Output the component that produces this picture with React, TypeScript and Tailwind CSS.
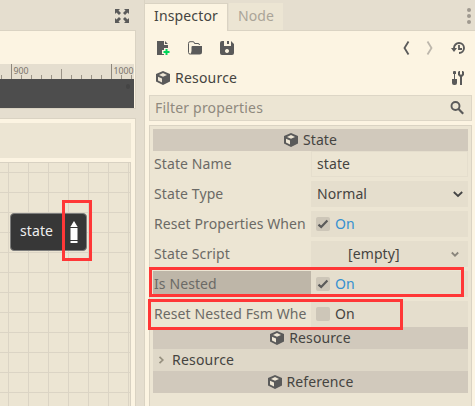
import type { ReactNode } from "react";

const ink = "#5a5a5a";

function Cube() {
  return (
    <svg width="14" height="14" viewBox="0 0 14 14" className="shrink-0">
      <path d="M7 0 L14 3 V10.6 L7 14 L0 10.6 V3 Z" fill={ink} />
      <path d="M7 2.1 L11 3.9 L7 5.8 L3 3.9 Z" fill="#eee6d5" />
      <path d="M2 5.7 L6 7.6 V11.4 L2 9.5 Z" fill="#eee6d5" />
    </svg>
  );
}

function Check({ on }: { on?: boolean }) {
  return (
    <span className="flex size-[14px] shrink-0 items-center justify-center rounded-[2px] bg-[#cdc6b8]">
      {on && (
        <svg width="12" height="12" viewBox="0 0 12 12">
          <path d="M1.5 6.6 L4.2 9 L10.4 2.6" fill="none" stroke={ink} strokeWidth="2.2" />
        </svg>
      )}
    </span>
  );
}

function Row({ label, selected, field, children }: { label: string; selected?: boolean; field?: boolean; children: ReactNode }) {
  return (
    <div className="flex h-[26px] shrink-0">
      <div className={`w-[158px] overflow-hidden whitespace-nowrap pl-[1px] leading-[26px] text-[#6b6a66] ${selected ? "bg-[#beb6a8]" : ""}`}>
        {label}
      </div>
      <div
        className={`flex flex-1 items-center ${field ? "border border-[#e5decd] bg-[#ece5d3] px-[5px]" : "bg-[#e5decd] px-[5px]"}`}
      >
        {children}
      </div>
    </div>
  );
}

function Header({ title }: { title: string }) {
  return (
    <div className="flex h-[22px] shrink-0 items-center justify-center gap-[5px] bg-[#d1c9bc]">
      <Cube />
      <span>{title}</span>
    </div>
  );
}

const minorTicks = [1, 21, 31, 41, 51, 71, 81, 91, 101, 121, 131];
const vLines = [8, 28, 48, 68, 88, 108, 128];
const hLines = [10, 30, 50, 70, 90, 110, 130, 150, 170, 190, 210, 230];

function Workspace() {
  return (
    <div className="flex w-[144px] shrink-0 flex-col">
      <div className="flex h-[30px] shrink-0 items-center justify-end pr-[14px] pt-[2px]">
        <svg width="16" height="16" viewBox="0 0 16 16" fill={ink}>
          <path d="M1 1h5L4.500 2.500 7 5 5 7 2.500 4.500 1 6zM15 1v5l-1.500-1.500L11 7 9 5l2.500-2.500L10 1zM1 15v-5l1.500 1.500L5 9l2 2-2.500 2.500L6 15zM15 15h-5l1.500-1.500L9 11l2-2 2.500 2.500L15 10z" />
        </svg>
      </div>
      <div className="flex h-[79px] w-[136px] shrink-0 flex-col border-y border-r border-[#dad3c3] bg-[#fcf4e2] pr-[1px] pt-[33px]">
        <svg width="134" height="15" className="block shrink-0 bg-[#e5decf] tracking-normal" shapeRendering="crispEdges">
          {minorTicks.map((x) => (
            <rect key={x} x={x} y="11" width="1" height="4" fill="#9a9387" />
          ))}
          <rect x="61" y="5" width="1" height="10" fill="#9a9387" />
          <rect x="11" y="0" width="1" height="15" fill="#8e877c" />
          <rect x="111" y="0" width="1" height="15" fill="#8e877c" />
          <text x="13.5" y="10" fontSize="9.5" fill="#7a746a" textLength="15" lengthAdjust="spacingAndGlyphs">900</text>
          <text x="113.5" y="10" fontSize="9.5" fill="#7a746a" textLength="20" lengthAdjust="spacingAndGlyphs">1000</text>
        </svg>
        <div className="h-[29px] w-[134px] shrink-0 bg-[#4d4d4d] pl-[126px] pt-[5px]">
          <div className="h-[5px] w-[4px] rounded-full bg-[#444444]" />
        </div>
      </div>
      <div className="mt-[9px] flex min-h-0 w-[136px] flex-1 flex-col border-r border-t border-[#dad3c3] bg-[#fcf4e2] pr-[4px] pt-[4px]">
        <div className="h-[35px] shrink-0 bg-[#ece5d3]" />
        <div className="relative mt-[4px] min-h-0 flex-1 overflow-hidden border-r border-t border-[#d8d1c2] bg-[#ece5d3]">
          <svg width="131" height="244" className="block" shapeRendering="crispEdges">
            {vLines.map((x) => (
              <rect key={x} x={x} y="0" width="1" height="244" fill="#dbd4c5" />
            ))}
            {hLines.map((y) => (
              <rect key={y} x="0" y={y - 1} width="131" height="1" fill="#dbd4c5" />
            ))}
          </svg>
          <div className="absolute left-[10px] top-[50px] flex h-[38px] w-[77px] items-center rounded-[4px] border border-[#7d7d7c] bg-[#373737] pl-[9px] text-[#efefef]">
            <span className="-mt-[2px] w-[50px]">state</span>
            <svg width="8" height="22" viewBox="0 0 8 22" fill="#ffffff">
              <path d="M4 0 L7.700 6 H0.300 Z" />
              <rect x="0.500" y="7" width="7" height="12" />
              <rect x="0.500" y="20" width="7" height="2" />
            </svg>
          </div>
          <div className="absolute left-[62px] top-[37px] h-[61px] w-[30px] border-[3px] border-[#ff3737]" />
        </div>
      </div>
    </div>
  );
}

function Toolbar() {
  return (
    <div className="flex h-[34px] shrink-0 items-center pl-[10px] pr-[9px]">
      <svg width="16" height="16" viewBox="0 0 16 16" className="mr-[16px]">
        <path d="M2 1h7v4h4v3h-4v2H7v4h2v1H2zM10 1l3 3h-3z" fill={ink} />
        <path d="M10.500 9h2v2h2v2h-2v2h-2v-2h-2v-2h2z" fill="#00d55a" />
      </svg>
      <svg width="16" height="16" viewBox="0 0 16 16" className="mr-[16px]">
        <path d="M3 14 Q1.500 14 1.500 12.500 V3.500 Q1.500 1.700 3 1.700 H6 Q7.500 1.700 7.500 3.500 H11 Q12.500 3.500 12.500 5" fill="none" stroke={ink} strokeWidth="1" />
        <path d="M5.500 6 H15 V12 Q15 14.500 12.500 14.500 H2.500 Q4.500 13.500 4.500 11 V7 Q4.500 6 5.500 6Z" fill={ink} />
      </svg>
      <svg width="16" height="16" viewBox="0 0 16 16">
        <path fillRule="evenodd" fill={ink} d="M3 1h9l3 3v9q0 2-2 2H3q-2 0-2-2V3q0-2 2-2zM5 1v5h7V1h-2v3H8V1zM8 9a2 2 0 1 0 .01 0z" />
      </svg>
      <div className="flex-1" />
      <svg width="8" height="16" viewBox="0 0 8 16" className="mr-[16px]">
        <path d="M6.500 1.500 L2.500 8 L6.500 14.500" fill="none" stroke={ink} strokeWidth="1.800" />
      </svg>
      <svg width="8" height="16" viewBox="0 0 8 16" className="mr-[16px]">
        <path d="M1.500 1.500 L5.500 8 L1.500 14.500" fill="none" stroke="#bdb7ac" strokeWidth="1.800" />
      </svg>
      <svg width="16" height="16" viewBox="0 0 16 16">
        <path d="M4 8 A5 5 0 1 1 9 13" fill="none" stroke={ink} strokeWidth="1.900" />
        <path d="M1 8 H7 L4 12Z" fill={ink} />
        <path d="M9 5v4h3" fill="none" stroke={ink} strokeWidth="1.800" />
      </svg>
    </div>
  );
}

function Inspector() {
  return (
    <div className="relative flex min-w-0 flex-1 flex-col border-l border-[#dad3c3] bg-[#fcf4e2]">
      <div className="flex h-[31px] shrink-0 bg-[#e5decf] pt-[3px]">
        <div className="w-[83px] border-r border-t border-[#dad3c3] bg-[#fcf4e2] pl-[9px] leading-[24px] tracking-[0.15px]">Inspector</div>
        <div className="flex flex-1 border-b border-[#dad3c3]">
          <div className="ml-px w-[54px] bg-[#ece5d3] pl-[9px] pt-[2px] leading-[22px] text-[#aaa498]">Node</div>
          <div className="flex-1" />
          <svg width="8" height="24" viewBox="0 0 8 24" className="mr-[1px]" fill="#9f998f">
            <circle cx="3" cy="7" r="2" />
            <circle cx="3" cy="13" r="2" />
            <circle cx="3" cy="19" r="2" />
          </svg>
        </div>
      </div>
      <Toolbar />
      <div className="flex h-[26px] shrink-0 items-center pl-[11px] pr-[10px]">
        <Cube />
        <span className="ml-[5px] flex-1 tracking-[0.2px]">Resource</span>
        <svg width="14" height="16" viewBox="0 0 14 16" fill={ink}>
          <path d="M2.500 1h2l.5 1v2h-1v5h2v4q0 2-2 2h-1q-2 0-2-2V9h2V4h-1V2z" />
          <path d="M7 2l1-1h1v3l1 1 1-1V1h1l1 1v3l-2 2v8H9V7L7 5z" />
        </svg>
      </div>
      <div className="ml-[4px] mr-[3px] mt-[4px] flex h-[26px] shrink-0 items-center border border-[#ddd6c6] bg-[#ece5d3] pl-[5px] pr-[6px] text-[#8f897e]">
        <span className="flex-1 tracking-[0.18px]">Filter properties</span>
        <svg width="16" height="16" viewBox="0 0 16 16" fill="none" stroke={ink}>
          <circle cx="6.500" cy="6" r="4" strokeWidth="1.900" />
          <path d="M9.300 8.800 L14.200 13.700" strokeWidth="2.200" />
        </svg>
      </div>
      <div className="ml-[4px] mr-[3px] mt-[4px] flex flex-1 flex-col border-x border-t border-[#dad3c3] bg-[#ece5d3] pl-[3px] pr-[3px] pt-[3px]">
        <Header title="State" />
        <div className="flex flex-col gap-[4px]">
          <Row label="State Name" field>state</Row>
          <Row label="State Type">
            <span className="flex-1 pl-[1px]">Normal</span>
            <svg width="10" height="8" viewBox="0 0 10 8">
              <path d="M0.800 2 L5 6 L9.200 2" fill="none" stroke="#444" strokeWidth="1.800" />
            </svg>
          </Row>
          <Row label="Reset Properties When">
            <Check on />
            <span className="ml-[5px] text-[#3690d0]">On</span>
          </Row>
          <Row label="State Script">
            <span className="flex-1 pl-[32px]">[empty]</span>
            <svg width="8" height="8" viewBox="0 0 8 8" className="mr-[4px]">
              <path d="M0.800 2.500 L4 5.700 L7.200 2.500" fill="none" stroke="#8a857c" strokeWidth="1.800" />
            </svg>
          </Row>
          <Row label="Is Nested" selected>
            <Check on />
            <span className="ml-[5px] text-[#3690d0]">On</span>
          </Row>
          <Row label="Reset Nested Fsm Whe">
            <Check />
            <span className="ml-[5px]">On</span>
          </Row>
        </div>
        <Header title="Resource" />
        <div className="flex h-[22px] shrink-0 items-center bg-[#dfd8c8] pl-[5px]">
          <svg width="7" height="8" viewBox="0 0 7 8">
            <path d="M1.500 0.800 L4.800 4 L1.500 7.200" fill="none" stroke="#96907f" strokeWidth="1.700" />
          </svg>
          <span className="ml-[7px] tracking-[0.2px]">Resource</span>
        </div>
        <Header title="Reference" />
      </div>
      <div className="absolute left-[4px] top-[267px] h-[30px] w-[315px] border-[3px] border-[#ff3737]" />
      <div className="absolute left-[3px] top-[299px] h-[31px] w-[255px] border-[3px] border-[#ff3737]" />
    </div>
  );
}

export default function App() {
  return (
    <div className="flex h-[406px] w-[475px] overflow-hidden bg-[#e5decf] font-['Noto_Sans',sans-serif] text-[14px] leading-[20px] tracking-[0.1px] text-[#454441]">
      <Workspace />
      <Inspector />
    </div>
  );
}
